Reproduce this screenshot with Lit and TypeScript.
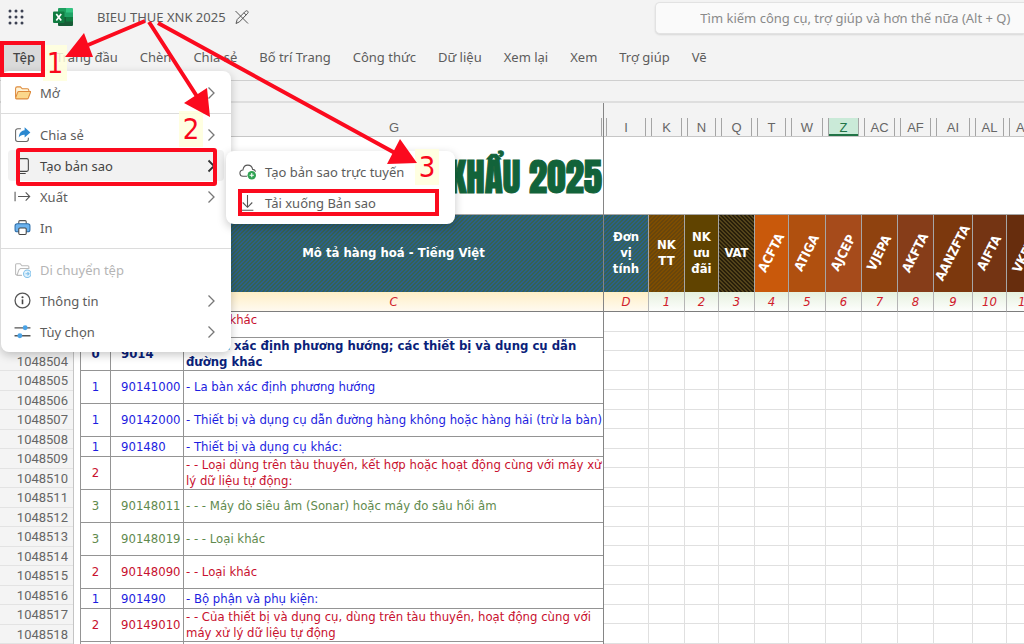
import { LitElement, html, css, svg, nothing } from "lit";
import { customElement } from "lit/decorators.js";
import { classMap } from "lit/directives/class-map.js";
import { styleMap } from "lit/directives/style-map.js";

interface MenuItem {
  label: string;
  icon: unknown;
  arrow?: boolean;
  active?: boolean;
  disabled?: boolean;
}

const icons = {
  open: svg`<path d="M1.5 12.5V4.2c0-.9.6-1.5 1.5-1.5h3l1.8 1.8h4.7c.9 0 1.5.6 1.5 1.5v1" fill="#fff3d6" stroke="#dd8a3c"/><path d="M4.6 7h11.2l-2.3 6.1c-.3.6-.7.9-1.3.9H2.4c-.7 0-1-.6-.8-1.2L3.4 7.9c.2-.6.6-.9 1.2-.9z" fill="#fbd78c" stroke="#dd8a3c"/>`,
  share: svg`<path d="M6.5 2.5h-3a2 2 0 0 0-2 2v8a2 2 0 0 0 2 2h8a2 2 0 0 0 2-2V11" fill="none" stroke="#666"/><path d="M10 1.2 15.4 6 10 10.800V8.200C7.400 8.100 5.800 9 4.500 10.800 4.800 7.200 6.500 4.500 10 4.100z" fill="#2b88d0"/>`,
  copy: svg`<rect x="4.500" y="1.500" width="9" height="12" rx="1.500" fill="none" stroke="#444"/><path d="M2.500 4v9a2.500 2.500 0 0 0 2.500 2.500h6" fill="none" stroke="#444"/>`,
  export: svg`<path d="M1 3.500v9M3.800 8h11M11 4.200 14.800 8 11 11.800" fill="none" stroke="#555"/>`,
  print: svg`<path d="M4.500 5V2.500c0-.6.4-1 1-1h5c.6 0 1 .4 1 1V5" fill="#fff" stroke="#555"/><rect x="1" y="4.500" width="14" height="7.500" rx="2" fill="#6db3ee" stroke="#2e6da8"/><rect x="4.500" y="8.500" width="7" height="6" rx="1" fill="#fff" stroke="#444"/>`,
  move: svg`<path d="M7.500 13.500H3l-1.500-1V3.500c0-.6.5-1 1-1h3.300l1.700 2h5.500c.6 0 1 .4 1 1V7H6L4.500 8.500 3 13" fill="none" stroke="#bbb"/><circle cx="12.500" cy="12" r="3.500" fill="#e4f3fd" stroke="#7fc0ea"/><path d="M10.800 12h3.400M12.700 10.500l1.500 1.500-1.500 1.500" fill="none" stroke="#7fc0ea"/>`,
  info: svg`<circle cx="8" cy="8" r="7" fill="none" stroke="#555" stroke-width="1.200"/><path d="M8 7v4.500" stroke="#444" stroke-width="1.500"/><circle cx="8" cy="4.900" r="1" fill="#444"/>`,
  options: svg`<path d="M.5 4.500h15M.5 12h15" stroke="#555" stroke-width="1.200"/><circle cx="10.500" cy="4.500" r="2.300" fill="#4aa3e6"/><circle cx="5.500" cy="12" r="2.300" fill="#4aa3e6"/>`,
  cloud: svg`<path d="M7.500 12.500H4a3 3 0 0 1-.3-6C4.100 3.800 6 2 8.300 2c2.400 0 4.200 1.700 4.500 4 1.400.1 2.500 1 2.700 2.200" fill="none" stroke="#555"/><circle cx="12" cy="11.500" r="4" fill="#31a354"/><path d="M12 9.500v4M10 11.500h4" stroke="#fff"/>`,
  download: svg`<path d="M8 1v11M3.500 8 8 12.500 12.500 8M2.500 15.300h11" fill="none" stroke="#555"/>`,
};

const fileMenu: MenuItem[][] = [
  [{ label: "Mở", icon: icons.open, arrow: true }],
  [
    { label: "Chia sẻ", icon: icons.share, arrow: true },
    { label: "Tạo bản sao", icon: icons.copy, arrow: true, active: true },
    { label: "Xuất", icon: icons.export, arrow: true },
    { label: "In", icon: icons.print },
  ],
  [
    { label: "Di chuyển tệp", icon: icons.move, disabled: true },
    { label: "Thông tin", icon: icons.info, arrow: true },
    { label: "Tùy chọn", icon: icons.options, arrow: true },
  ],
];

const copyMenu: MenuItem[][] = [
  [
    { label: "Tạo bản sao trực tuyến", icon: icons.cloud },
    { label: "Tải xuống Bản sao", icon: icons.download },
  ],
];

const tabs = ["Tệp", "Trang đầu", "Chèn", "Chia sẻ", "Bố trí Trang", "Công thức", "Dữ liệu", "Xem lại", "Xem", "Trợ giúp", "Vẽ"];

const goods = [
  { h: 26, tone: "red first", level: "2", code: "", text: "- - Loại khác" },
  { h: 33, tone: "navy", level: "0", code: "9014", text: "La bàn xác định phương hướng; các thiết bị và dụng cụ dẫn\nđường khác" },
  { h: 33, tone: "blue", level: "1", code: "90141000", text: "- La bàn xác định phương hướng" },
  { h: 33, tone: "blue", level: "1", code: "90142000", text: "- Thiết bị và dụng cụ dẫn đường hàng không hoặc hàng hải (trừ la bàn)" },
  { h: 20, tone: "blue", level: "1", code: "901480", text: "- Thiết bị và dụng cụ khác:" },
  { h: 33, tone: "red", level: "2", code: "", text: "- - Loại dùng trên tàu thuyền, kết hợp hoặc hoạt động cùng với máy xử\nlý dữ liệu tự động:" },
  { h: 33, tone: "green", level: "3", code: "90148011", text: "- - - Máy dò siêu âm (Sonar) hoặc máy đo sâu hồi âm" },
  { h: 33, tone: "green", level: "3", code: "90148019", text: "- - - Loại khác" },
  { h: 33, tone: "red", level: "2", code: "90148090", text: "- - Loại khác" },
  { h: 20, tone: "blue", level: "1", code: "901490", text: "- Bộ phận và phụ kiện:" },
  { h: 33, tone: "red", level: "2", code: "90149010", text: "- - Của thiết bị và dụng cụ, dùng trên tàu thuyền, hoạt động cùng với\nmáy xử lý dữ liệu tự động" },
  { h: 33, tone: "red", level: "", code: "", text: "" },
];

const rates = [
  { w: 45, col: "I", name: "Đơn vị tính", idx: "D", tone: "teal" },
  { w: 36, col: "K", name: "NK TT", idx: "1", tone: "ochre" },
  { w: 34, col: "N", name: "NK ưu đãi", idx: "2", bg: "#604300" },
  { w: 36, col: "Q", name: "VAT", idx: "3", tone: "dark" },
  { w: 34, col: "T", name: "ACFTA", idx: "4", bg: "#c9590b", slant: true },
  { w: 37, col: "W", name: "ATIGA", idx: "5", bg: "#b0500f", slant: true },
  { w: 36, col: "Z", name: "AJCEP", idx: "6", bg: "#a64b1b", slant: true },
  { w: 36, col: "AC", name: "VJEPA", idx: "7", bg: "#8f420f", slant: true },
  { w: 36, col: "AF", name: "AKFTA", idx: "8", bg: "#863d19", slant: true },
  { w: 39, col: "AI", name: "AANZFTA", idx: "9", bg: "#7c380d", slant: true },
  { w: 34, col: "AL", name: "AIFTA", idx: "10", bg: "#743413", slant: true },
  { w: 38, col: "AO", name: "VKFTA", idx: "11", bg: "#672d0d", slant: true },
];

const rowNumbers = Array.from({ length: 15 }, (_, i) => 1048504 + i);
const emptyRows = Array.from({ length: 17 }, (_, i) => i);

@customElement("app-root")
export class AppRoot extends LitElement {
  static styles = css`
    :host {
      display: flex;
      flex-direction: column;
      position: relative;
      height: 100vh;
      overflow: hidden;
      background: #f3f3f3;
      color: #5c5c5c;
      font: 13px/20px "Noto Sans", "Open Sans", sans-serif;
    }
    * { box-sizing: border-box; }
    button, input { font: inherit; color: inherit; border: 0; background: none; padding: 0; margin: 0; }
    table { border-collapse: separate; border-spacing: 0; table-layout: fixed; }
    th, td { padding: 0; }

    .titlebar { display: grid; grid-template-columns: 16fr 9fr; height: 36px; flex: none; }
    .brand { display: flex; align-items: center; padding: 0 0 2px 8px; }
    .waffle { display: flex; margin-right: 29px; }
    .logo { margin-right: 24px; }
    .doc { font-size: 13px; margin-right: 8px; }
    .search {
      align-self: center; height: 32px; padding-left: 44px; width: 100%;
      background: #fafafa; border: 1px solid #e2e2e2; border-right: 0;
      border-radius: 5px 0 0 5px; box-shadow: 0 1px 2px #0000001f;
    }
    .search::placeholder { color: #8a8a8a; opacity: 1; }

    .tabs { display: flex; height: 44px; flex: none; align-items: center; padding: 0 0 2px 4px; }
    .tab { margin-right: 22px; white-space: nowrap; }
    .tab.current {
      width: 38px; height: 32px; margin-right: 14px; padding-left: 2px;
      background: #dadada; color: #444; font-weight: 500;
    }
    .formula { flex: none; height: 23px; border-top: 1px solid #cfcfcf; border-bottom: 2px solid #dedede; }

    .sheet { flex: 1; min-height: 0; display: flex; overflow: hidden; background: #fff; }
    .numbers { flex: none; width: 74px; background: #f4f4f4; border-right: 1px solid #c4c4c4; }
    .corner { height: 249px; }
    .num {
      height: 19px; line-height: 19px; padding-right: 5px; text-align: right;
      font-family: Roboto, sans-serif; font-size: 13px; color: #666;
      box-shadow: inset 0 -1px #e3e3e3;
    }
    .num:nth-child(odd) { height: 20px; line-height: 20px; }

    .left { flex: none; width: 530px; border-right: 1px solid #858585; overflow: hidden; }
    .letters { display: flex; height: 34px; background: #f3f3f3; border-bottom: 1px solid #c6c6c6; padding-top: 15px; }
    .letter {
      border: solid #a5a5a5; border-width: 0 1px; margin: 0 3px 0 2px; text-align: center;
      font: 13px/19px "Liberation Sans", sans-serif; color: #666; flex: none;
    }
    .letter.wide { flex: 1; margin: 0 1px 0 0; border-left: 0; padding-left: 113px; }
    .letter.on { background: #caead8; color: #217346; box-shadow: 0 -2px #217346 inset; }
    .banner {
      height: 77px; display: flex; align-items: center; justify-content: flex-end; white-space: nowrap;
      padding: 4px 1px 0 0; font: 400 37px/73px "Anton", "Oswald", "Roboto Condensed", "Roboto", sans-serif;
      color: #12633a; -webkit-text-stroke: 1px #12633a;
    }
    .goods { width: 523px; margin-left: 6px; font: 13px/16px "DejaVu Sans Condensed", "DejaVu Sans", sans-serif; }
    .goods .c1 { width: 31px; }
    .goods .c2 { width: 73px; }
    .goods td { border: solid #949494; border-width: 0 1px 1px 0; white-space: pre; }
    .goods td:first-child { border-left-width: 1px; text-align: center; }
    .goods td:nth-child(2) { padding-left: 10px; }
    .goods td:nth-child(3) { padding-left: 2px; border-right: 0; }
    .head th {
      height: 78px; padding-bottom: 2px; color: #fff; font: bold 13px/16px "DejaVu Sans Condensed", "DejaVu Sans", sans-serif;
      border-right: 1px solid #a6a6a6; border-top: 1px solid #a6a6a6;
    }
    .head th:last-child { border-right: 0; }
    .goods .head th { border-right: 0; }
    .index th {
      height: 20px; font: italic 13px/18px "DejaVu Sans Condensed", "DejaVu Sans", sans-serif; color: #d0202c;
      border-bottom: 1px solid #7d7d7d; border-right: 1px solid #b5b5b5;
      background: linear-gradient(#e6f1df, #fdfefc);
    }
    .index th.warm { background: linear-gradient(#ffefc6, #fffaf0); }
    .goods .index th { border-right: 0; }
    .teal { background: linear-gradient(135deg, #2a6088 25%, #366253 25% 50%, #2a6088 50% 75%, #366253 75%) 0 0 / 4px 4px; }
    .ochre { background: linear-gradient(135deg, #7d4d00 25%, #68450c 25% 50%, #7d4d00 50% 75%, #68450c 75%) 0 0 / 4px 4px; }
    .dark { background: linear-gradient(45deg, #281e0a 25%, #54441a 25% 50%, #281e0a 50% 75%, #54441a 75%) 0 0 / 4px 4px; }
    .red { color: #c8102e; }
    .navy { color: #0b1f7a; font-weight: bold; }
    .blue { color: #1d1de0; }
    .green { color: #5f8a4e; }
    .first td { vertical-align: top; }

    .right { flex: 1; min-width: 0; overflow: hidden; }
    .rates { width: 441px; }
    .rates td { height: 19px; border: solid #e0e0e0; border-width: 0 1px 1px 0; }
    .rates tr:nth-child(odd) td { height: 20px; }
    .label { display: block; padding: 0 5px; }
    .tight { padding: 0; }
    .slant { display: flex; justify-content: center; padding: 0; transform: rotate(-63deg); }

    .menu {
      position: absolute; z-index: 2; background: #fff; border-radius: 8px; padding: 6px 0 5px;
      box-shadow: 0 3px 10px #00000038;
    }
    .file { left: 1px; top: 71px; width: 230px; }
    .copy { left: 226px; top: 151px; width: 229px; z-index: 3; }
    .menu.copy { padding: 5px 0 6px; }
    .group + .group { border-top: 1px solid #dcdcdc; margin-top: 5px; padding-top: 5px; }
    .item {
      display: flex; align-items: center; width: 216px; height: 31px; margin-left: 7px; padding: 0 8px 0 6px;
      text-align: left; border-radius: 4px;
    }
    .item.active { background: #f2f2f2; color: #444; }
    .item:disabled { color: #b5b5b5; }
    .text { flex: 1; margin-left: 9px; white-space: nowrap; }

    .marks { position: absolute; left: 0; top: 0; z-index: 4; pointer-events: none; }
    .step {
      position: absolute; z-index: 4; width: 24px; height: 36px; text-align: center; color: #f8081c;
      background: #ffffdcd9; font: 29px/36px "DejaVu Sans Condensed", "DejaVu Sans", sans-serif;
    }
    .s1 { left: 43px; top: 45px; }
    .s2 { left: 179px; top: 111px; }
    .s3 { left: 415px; top: 149px; }
  `;

  private menu(groups: MenuItem[][], name: string) {
    return html`<div class="menu ${name}" role="menu">
      ${groups.map(
        (group) => html`<div class="group">
          ${group.map(
            (item) => html`<button role="menuitem" class=${classMap({ item: true, active: !!item.active })} ?disabled=${item.disabled}>
              <svg width="17" height="17" viewBox="0 0 16 16">${item.icon}</svg>
              <span class="text">${item.label}</span>
              ${item.arrow
                ? html`<svg width="9" height="14" viewBox="0 0 9 14"><path d="M1.500 1.500 7 7l-5.500 5.500" fill="none" stroke=${item.active ? "#333" : "#777"} stroke-width=${item.active ? 1.8 : 1.3} /></svg>`
                : nothing}
            </button>`
          )}
        </div>`
      )}
    </div>`;
  }

  private titleBar() {
    return html`<header class="titlebar">
      <div class="brand">
        <button class="waffle" aria-label="Ứng dụng">
          <svg width="16" height="16" viewBox="0 0 16 16" fill="#3c4152">
            ${[2, 8, 14].map((y) => [2, 8, 14].map((x) => svg`<circle cx=${x} cy=${y} r="1.500"/>`))}
          </svg>
        </button>
        <svg class="logo" width="20" height="18" viewBox="0 0 20 18">
          <rect x="5" width="15" height="18" rx="1.500" fill="#21a366" />
          <path d="M5 1.500C5 .7 5.700 0 6.500 0H13v4.500H5z" fill="#1f9f5f" />
          <path d="M13 0h5.500c.8 0 1.500.7 1.500 1.500v3h-7z" fill="#33c481" />
          <path d="M5 9h15v7.500c0 .8-.7 1.500-1.500 1.500h-12c-.8 0-1.500-.7-1.500-1.500z" fill="#185c37" />
          <path d="M13 9h7v4.500h-7z" fill="#107c41" />
          <rect y="3.500" width="11.500" height="11.500" rx="1" fill="#107c41" />
          <path d="M3.300 6 8.200 12.600M8.200 6 3.300 12.600" stroke="#fff" stroke-width="1.700" />
        </svg>
        <span class="doc">BIEU THUE XNK 2025</span>
        <svg width="16" height="16" viewBox="0 0 16 16" fill="none" stroke="#555">
          <path d="M2 14.500 3.200 10.500 11.500 2.200c1.500-1.300 3.500.6 2.200 2.100L5.500 12.800 2 14.500zM10 3.800l2.300 2.300M1.500 2 14 14.500" />
        </svg>
      </div>
      <input class="search" type="search" aria-label="Tìm kiếm" placeholder="Tìm kiếm công cụ, trợ giúp và hơn thế nữa (Alt + Q)" />
    </header>`;
  }

  private goodsPane() {
    return html`<div class="left">
      <div class="letters"><div class="letter wide">G</div></div>
      <div class="banner">KHẨU 2025</div>
      <table class="goods">
        <colgroup><col class="c1" /><col class="c2" /><col /></colgroup>
        <thead>
          <tr class="head"><th class="teal"></th><th class="teal"></th><th class="teal">Mô tả hàng hoá - Tiếng Việt</th></tr>
          <tr class="index"><th class="warm"></th><th class="warm"></th><th class="warm">C</th></tr>
        </thead>
        <tbody>
          ${goods.map(
            (g) => html`<tr class=${g.tone} style=${styleMap({ height: `${g.h}px` })}>
              <td>${g.level}</td><td>${g.code}</td><td>${g.text}</td>
            </tr>`
          )}
        </tbody>
      </table>
    </div>`;
  }

  private ratesPane() {
    return html`<div class="right">
      <div class="letters">
        ${rates.map(
          (r) => html`<div class=${classMap({ letter: true, on: r.col === "Z" })} style=${styleMap({ width: `${r.w - 5}px` })}>${r.col}</div>`
        )}
      </div>
      <div class="banner"></div>
      <table class="rates">
        <colgroup>${rates.map((r) => html`<col style=${styleMap({ width: `${r.w}px` })} />`)}</colgroup>
        <thead>
          <tr class="head">
            ${rates.map(
              (r) => html`<th class=${r.tone ?? ""} style=${styleMap(r.bg ? { background: r.bg } : {})}>
                <span class=${classMap({ label: true, slant: !!r.slant, tight: r.name === "VAT" })}>${r.name}</span>
              </th>`
            )}
          </tr>
          <tr class="index">${rates.map((r) => html`<th class=${r.idx === "D" ? "warm" : ""}>${r.idx}</th>`)}</tr>
        </thead>
        <tbody>${emptyRows.map(() => html`<tr>${rates.map(() => html`<td></td>`)}</tr>`)}</tbody>
      </table>
    </div>`;
  }

  render() {
    return html`
      ${this.titleBar()}
      <nav class="tabs">
        ${tabs.map((t, i) => html`<button class=${classMap({ tab: true, current: i === 0 })}>${t}</button>`)}
      </nav>
      <div class="formula"></div>
      <main class="sheet">
        <div class="numbers">
          <div class="corner"></div>
          ${rowNumbers.map((n) => html`<div class="num">${n}</div>`)}
        </div>
        ${this.goodsPane()} ${this.ratesPane()}
      </main>
      ${this.menu(fileMenu, "file")} ${this.menu(copyMenu, "copy")}
      <span class="step s1">1</span>
      <span class="step s2">2</span>
      <span class="step s3">3</span>
      <svg class="marks" width="460" height="230" viewBox="0 0 460 230" fill="none" stroke="#fb0a1e" stroke-width="4">
        <rect x="2" y="43" width="41" height="32" />
        <rect x="18" y="150" width="197" height="34" rx="1" />
        <rect x="240" y="191" width="197" height="23" />
        <path d="M145 21 88 45M149 22 198 98M158 23 395 153" />
        <path d="M65 57 84 33 93 57zM210 117 184 103 207 88zM417 163 400 139 387 164z" fill="#fb0a1e" stroke="none" />
      </svg>
    `;
  }
}
